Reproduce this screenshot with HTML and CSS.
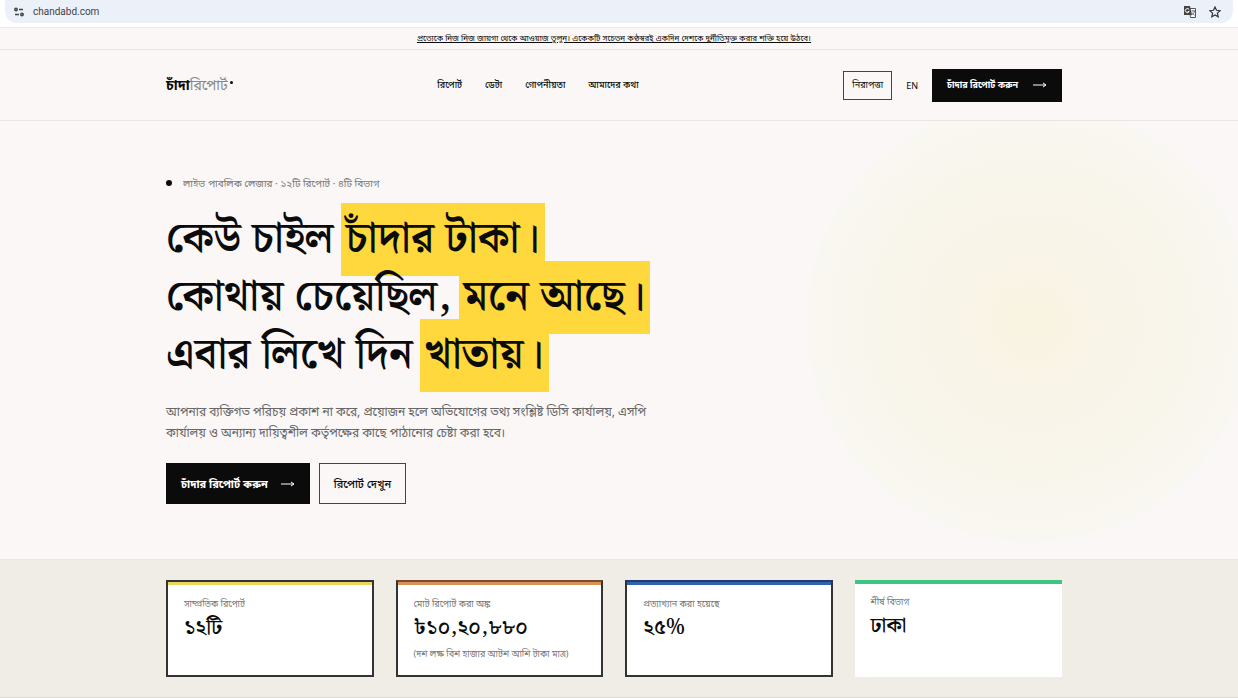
FILE: index.html
```
<!DOCTYPE html>
<html lang="bn">
    <head>
        <meta charset="utf-8">
        <meta name="viewport" content="width=device-width, initial-scale=1">
        <title>চাঁদা রিপোর্ট</title>
        <link rel="stylesheet" href="styles.css">
    </head>
    <body>
        <div class="browser">
            <div class="address">
                <svg class="tune" width="12" height="12" viewBox="0 0 12 12" fill="none" stroke="#444" stroke-width="1.500">
                    <circle cx="3" cy="3.500" r="1.200"/>
                    <path d="M6 3.500h4M2 8.500h4"/>
                    <circle cx="9" cy="8.500" r="1.200"/>
                </svg>
                <span class="url">chandabd.com</span>
                <svg width="14" height="14" viewBox="0 0 14 14">
                    <path d="M6 3.500h6.500v9h-5z" fill="#fff" stroke="#555"/>
                    <path d="M1 1h6l2 9H1z" fill="#444"/>
                    <path d="M6.200 4.600A2 2 0 1 0 6.200 6.500H4.600" fill="none" stroke="#fff"/>
                    <path d="M8.500 6h3.500M10 5v1M11.500 6c0 2-1.500 3-3 4M9 7.500l2.500 3" fill="none" stroke="#555" stroke-width=".8"/>
                </svg>
                <svg width="12" height="12" viewBox="0 0 12 12" fill="none" stroke="#333" stroke-width="1.200">
                    <path d="M6 1l1.500 3.300 3.600.4-2.700 2.400.8 3.600L6 8.900l-3.200 1.800.8-3.600L.9 4.700l3.600-.4z"/>
                </svg>
            </div>
        </div>

        <div class="notice">
            <a href="#">প্রত্যেকে নিজ নিজ জায়গা থেকে আওয়াজ তুলুন। একেকটি সচেতন কণ্ঠস্বরই একদিন দেশকে দুর্নীতিমুক্ত করার শক্তি হয়ে উঠবে।</a>
        </div>

        <header class="header">
            <div class="wrap header-row">
                <a class="logo" href="#"><b>চাঁদা</b><span>রিপোর্ট</span><i></i></a>
                <nav class="nav">
                    <a href="#">রিপোর্ট</a>
                    <a href="#">ডেটা</a>
                    <a href="#">গোপনীয়তা</a>
                    <a href="#">আমাদের কথা</a>
                </nav>
                <div class="actions">
                    <button class="btn btn-safe">নিরাপত্তা</button>
                    <button class="lang">EN</button>
                    <button class="btn btn-dark btn-small">
                        চাঁদার রিপোর্ট করুন
                        <svg width="14" height="8" viewBox="0 0 14 8" fill="none" stroke="currentColor"><path d="M0 4h13M10 2l3 2-3 2"/></svg>
                    </button>
                </div>
            </div>
        </header>

        <main>
            <section class="hero">
                <div class="glow"></div>
                <div class="wrap">
                    <p class="eyebrow"><i></i>লাইভ পাবলিক লেজার · ১২টি রিপোর্ট · ৪টি বিভাগ</p>
                    <h1>
                        কেউ চাইল <mark>চাঁদার টাকা।</mark><br>
                        কোথায় চেয়েছিল, <mark>মনে আছে।</mark><br>
                        এবার লিখে দিন <mark>খাতায়।</mark>
                    </h1>
                    <p class="lead">আপনার ব্যক্তিগত পরিচয় প্রকাশ না করে, প্রয়োজন হলে অভিযোগের তথ্য সংশ্লিষ্ট ডিসি কার্যালয়, এসপি কার্যালয় ও অন্যান্য দায়িত্বশীল কর্তৃপক্ষের কাছে পাঠানোর চেষ্টা করা হবে।</p>
                    <div class="hero-buttons">
                        <button class="btn btn-dark">
                            চাঁদার রিপোর্ট করুন
                            <svg width="14" height="8" viewBox="0 0 14 8" fill="none" stroke="currentColor"><path d="M0 4h13M10 2l3 2-3 2"/></svg>
                        </button>
                        <button class="btn btn-line">রিপোর্ট দেখুন</button>
                    </div>
                </div>
            </section>

            <section class="stats">
                <div class="wrap cards">
                    <div class="card yellow">
                        <p class="label">সাম্প্রতিক রিপোর্ট</p>
                        <p class="value">১২টি</p>
                    </div>
                    <div class="card orange">
                        <p class="label">মোট রিপোর্ট করা অঙ্ক</p>
                        <p class="value">৳১০,২০,৮৮০</p>
                        <p class="note">(দশ লক্ষ বিশ হাজার আটশ আশি টাকা মাত্র)</p>
                    </div>
                    <div class="card blue">
                        <p class="label">প্রত্যাখ্যান করা হয়েছে</p>
                        <p class="value">২৫%</p>
                    </div>
                    <div class="card green">
                        <p class="label">শীর্ষ বিভাগ</p>
                        <p class="value">ঢাকা</p>
                    </div>
                </div>
            </section>
        </main>
    </body>
</html>
```
FILE: styles.css
```
* {
    box-sizing: border-box;
}

body {
    margin: 0;
    background: #faf7f6;
    color: #0b0b0b;
    font-family: "Noto Sans", "Noto Sans Bengali", sans-serif;
    font-size: 9px;
}

p, h1 {
    margin: 0;
}

a {
    color: inherit;
    text-decoration: none;
}

button {
    padding: 0;
    border: 0;
    background: none;
    color: inherit;
    font: inherit;
    cursor: pointer;
}

/* address bar */
.browser {
    height: 28px;
    padding: 0 5px;
    background: #fff;
    border-bottom: 1px solid #eeebe9;
}

.address {
    display: flex;
    align-items: center;
    gap: 12px;
    height: 23px;
    padding: 0 12px 0 8px;
    border-radius: 0 0 12px 12px;
    background: #ebf0f9;
}

.tune {
    margin-right: -4px;
}

.url {
    flex: 1;
    color: #444;
    font-family: Roboto, sans-serif;
    font-size: 10px;
}

.notice {
    height: 22px;
    padding-right: 10px;
    border-bottom: 1px solid #e9e5e3;
    font-size: 8px;
    line-height: 20px;
    text-align: center;
}

.notice a {
    text-decoration: underline;
}

.wrap {
    max-width: 896px;
    margin: 0 auto;
}

.header,
.hero,
.stats {
    padding: 0 26px 0 16px;
}

.header {
    border-bottom: 1px solid #e9e5e3;
}

.header-row {
    display: flex;
    align-items: center;
    justify-content: space-between;
    height: 70px;
}

.logo {
    display: flex;
    align-items: center;
    font-size: 14px;
}

.logo span {
    color: #8b8785;
}

.logo i {
    width: 3px;
    height: 3px;
    margin: 0 0 6px 2px;
    border-radius: 50%;
    background: #0b0b0b;
}

.nav {
    display: flex;
    gap: 23px;
    font-weight: 500;
}

.actions {
    display: flex;
    align-items: center;
    gap: 14px;
}

.btn {
    display: flex;
    align-items: center;
    gap: 13px;
    height: 41px;
    padding: 0 14px;
    border: 1px solid #444;
    font-size: 11px;
    white-space: nowrap;
}

.btn-safe {
    height: 29px;
    padding: 0 8px;
    font-size: 9px;
}

.btn-dark {
    border-color: #0b0b0b;
    background: #0b0b0b;
    color: #fff;
    font-weight: 700;
}

.btn-small {
    gap: 15px;
    height: 33px;
    font-size: 9px;
}

.btn-line {
    font-weight: 500;
}

.hero {
    position: relative;
    overflow: hidden;
    padding-top: 53px;
    padding-bottom: 55px;
    border-bottom: 1px solid #e9e5e3;
}

.hero .wrap {
    position: relative;
}

/* soft yellow circle behind the hero */
.glow {
    position: absolute;
    top: -21px;
    right: -18px;
    width: 452px;
    height: 444px;
    border-radius: 50%;
    background: radial-gradient(closest-side, #faf3e1, #f8f4e8 35%, #f8f5eb 65%, #f9f7f1 97%, #faf7f6);
}

.eyebrow {
    display: flex;
    align-items: center;
    gap: 11px;
    height: 18px;
    color: #777;
    font-size: 10px;
}

.eyebrow i {
    width: 6px;
    height: 6px;
    border-radius: 50%;
    background: #0b0b0b;
}

h1 {
    margin-top: 19px;
    font-family: "Noto Serif Bengali", "Liberation Serif", serif;
    font-size: 43px;
    font-weight: 600;
    line-height: 58px;
    white-space: nowrap;
}

mark {
    margin-left: -4px;
    padding: 2px 5px;
    background: #ffd83d;
    color: inherit;
}

.lead {
    max-width: 500px;
    margin-top: 16px;
    color: #666;
    font-size: 12px;
    line-height: 21px;
}

.hero-buttons {
    display: flex;
    gap: 9px;
    margin-top: 20px;
}

.stats {
    padding-top: 20px;
    padding-bottom: 20px;
    border-bottom: 1px solid #dedad6;
    background: #f0ede6;
}

.cards {
    display: grid;
    grid-template-columns: repeat(4, 1fr);
    gap: 22px;
}

.card {
    min-height: 97px;
    padding: 13px 16px 12px;
    border: 2px solid #333;
    background: #fff;
}

.label,
.note {
    color: #777;
    line-height: 18px;
}

.value {
    font-family: "Noto Serif Bengali", "Liberation Serif", serif;
    font-size: 21px;
    font-weight: 600;
    line-height: 30px;
}

.note {
    margin-top: 2px;
}

.yellow {
    box-shadow: inset 0 3px #e9d95f;
}

.orange {
    border-top-color: #7b4a2c;
    box-shadow: inset 0 3px #d7915a;
}

.blue {
    border-top-color: #213c73;
    box-shadow: inset 0 3px #3262ae;
}

.green {
    border: 0;
    box-shadow: inset 0 4px #3cc583;
}
```
